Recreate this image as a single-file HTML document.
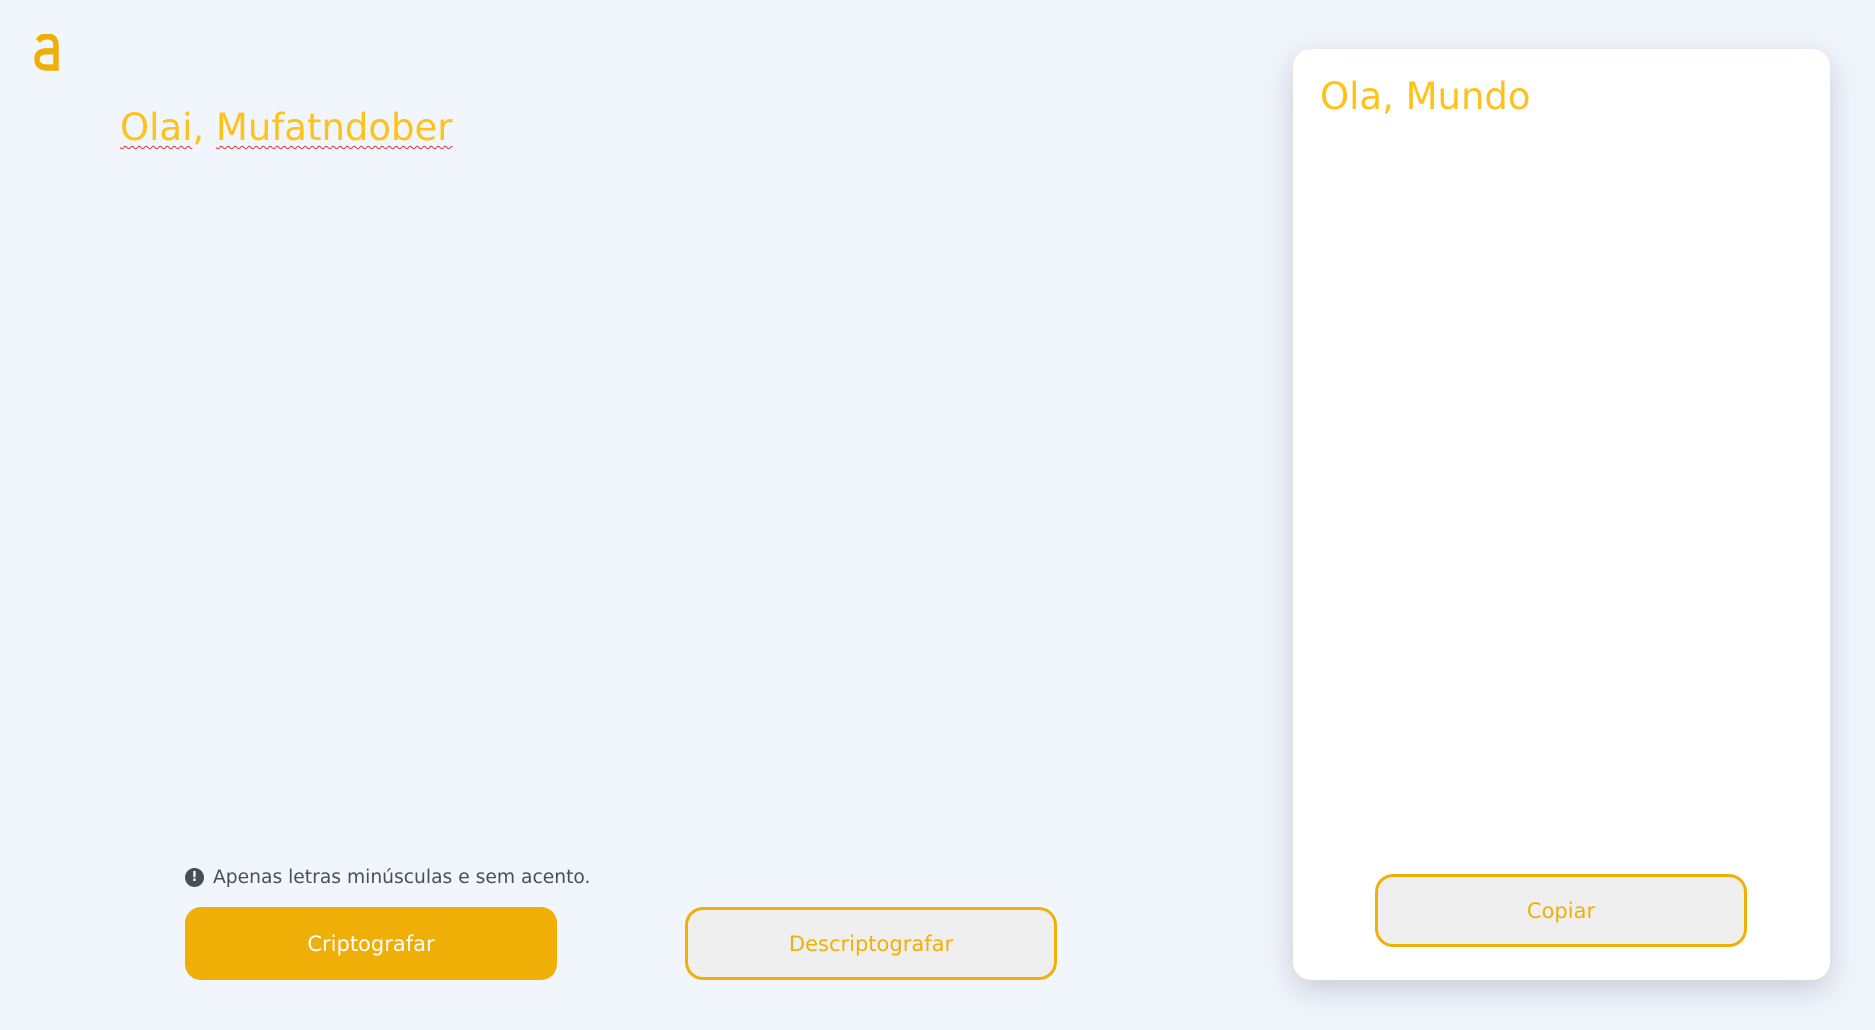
<!DOCTYPE html>
<html><head><meta charset="utf-8"><style>
*{margin:0;padding:0;box-sizing:border-box}
html,body{width:1875px;height:1030px;background:#f1f5fc;font-family:"DejaVu Sans","Liberation Sans",sans-serif;overflow:hidden;position:relative}
.logo{position:absolute;left:33px;top:34px}
.title{position:absolute;left:120px;top:109px;font-size:37px;color:#ffc21a;line-height:1}
.title u{text-decoration:underline wavy #e53030;text-decoration-thickness:1px;text-underline-offset:5px;text-decoration-skip-ink:none}
.note{position:absolute;left:185px;top:867px;font-size:18.7px;color:#4a4e57;display:flex;align-items:center;gap:9px}
.note .i{width:19px;height:19px;border-radius:50%;background:#4a4e57;color:#fff;font-size:13px;font-weight:bold;display:flex;align-items:center;justify-content:center}
.btn{position:absolute;height:73px;width:372px;border-radius:16px;font-size:21px;display:flex;align-items:center;justify-content:center}
.b1{left:185px;top:907px;background:#efaf06;color:#fff}
.b2{left:685px;top:907px;background:#efefef;border:3px solid #f0b005;color:#f0b005;border-radius:18px}
.card{position:absolute;left:1293px;top:49px;width:537px;height:931px;background:#fff;border-radius:18px;box-shadow:0 10px 30px rgba(120,130,150,.35)}
.card h2{position:absolute;left:27px;top:26px;font-weight:normal;font-size:37px;color:#ffc21a}
.b3{left:82px;top:825px;background:#efefef;border:3px solid #f0b005;color:#f0b005;border-radius:18px;width:372px;height:73px}
</style></head><body>
<svg class="logo" width="30" height="37" viewBox="0 0 30 32" preserveAspectRatio="none"><path d="M5 6 Q8 2 14 2 Q23 2 23 10 L23 29 L14 29 Q4 29 4 21.5 Q4 15 14 15 L23 15" fill="none" stroke="#efaf06" stroke-width="5.5"/></svg>
<div class="title"><u>Olai</u>, <u>Mufatndober</u></div>
<div class="note"><span class="i">!</span>Apenas letras minúsculas e sem acento.</div>
<div class="btn b1">Criptografar</div>
<div class="btn b2">Descriptografar</div>
<div class="card"><h2>Ola, Mundo</h2><div class="btn b3">Copiar</div></div>
</body></html>
